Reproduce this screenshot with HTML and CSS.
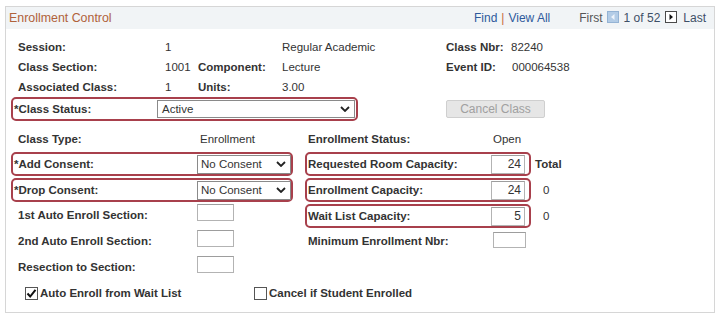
FILE: index.html
```html
<!DOCTYPE html>
<html>
<head>
<meta charset="utf-8">
<link rel="stylesheet" href="styles.css">
</head>
<body>
<div class="panel">
  <div class="hdr">
    <span class="title">Enrollment Control</span>
    <div class="nav">
      <span class="lnk">Find</span><span class="sep">|</span><span class="lnk">View All</span>
      <span class="first">First</span>
      <svg class="ico" width="12" height="12" viewBox="0 0 12 12"><rect x="0.5" y="0.5" width="11" height="11" fill="#b3cce6" stroke="#94b3d4"/><path d="M7.5 3 L4 6 L7.5 9 Z" fill="#eef4fb"/></svg>
      <span class="count">1 of 52</span>
      <svg class="ico ico-next" width="12" height="12" viewBox="0 0 12 12"><rect x="0.5" y="0.5" width="11" height="11" fill="#fff" stroke="#4a4a4a"/><path d="M4.5 3 L8 6 L4.5 9 Z" fill="#111"/></svg>
      <span class="last">Last</span>
    </div>
  </div>
  <div class="content">
    <div class="info">
      <div class="irow"><span class="c1 lbl">Session:</span><span class="c2">1</span><span class="c3"></span><span class="c4">Regular Academic</span><span class="c5 lbl">Class Nbr:</span><span class="c6">82240</span></div>
      <div class="irow"><span class="c1 lbl">Class Section:</span><span class="c2">1001</span><span class="c3 lbl">Component:</span><span class="c4">Lecture</span><span class="c5 lbl">Event ID:</span><span class="c6 c6b">000064538</span></div>
      <div class="irow"><span class="c1 lbl">Associated Class:</span><span class="c2">1</span><span class="c3 lbl">Units:</span><span class="c4">3.00</span></div>
    </div>
    <div class="status-row">
      <div class="hl hl-status">
        <span class="lbl hl-lbl status-lbl">*Class Status:</span>
        <div class="sel sel-wide"><span>Active</span><svg width="10" height="6" viewBox="0 0 10 6"><path d="M1 1 L5 5 L9 1" fill="none" stroke="#222" stroke-width="1.8"/></svg></div>
      </div>
      <div class="btn">Cancel Class</div>
    </div>
    <div class="cols">
      <div class="left">
        <div class="lrow"><span class="lbl ltype">Class Type:</span><span>Enrollment</span></div>
        <div class="hl hl-left hl-first">
          <span class="lbl hl-lbl consent-lbl">*Add Consent:</span>
          <div class="sel sel-small"><span>No Consent</span><svg width="10" height="6" viewBox="0 0 10 6"><path d="M1 1 L5 5 L9 1" fill="none" stroke="#222" stroke-width="1.8"/></svg></div>
        </div>
        <div class="hl hl-left">
          <span class="lbl hl-lbl consent-lbl">*Drop Consent:</span>
          <div class="sel sel-small"><span>No Consent</span><svg width="10" height="6" viewBox="0 0 10 6"><path d="M1 1 L5 5 L9 1" fill="none" stroke="#222" stroke-width="1.8"/></svg></div>
        </div>
        <div class="arow"><span class="lbl alabel">1st Auto Enroll Section:</span><span class="inp inp-sec"></span></div>
        <div class="arow"><span class="lbl alabel">2nd Auto Enroll Section:</span><span class="inp inp-sec"></span></div>
        <div class="arow"><span class="lbl alabel">Resection to Section:</span><span class="inp inp-sec"></span></div>
      </div>
      <div class="right">
        <div class="rrow"><span class="lbl rlabel">Enrollment Status:</span><span>Open</span></div>
        <div class="cap-row cap-first">
          <div class="hl hl-right"><span class="lbl hl-lbl cap-lbl">Requested Room Capacity:</span><span class="inp inp-num">24</span></div>
          <span class="lbl after-total">Total</span>
        </div>
        <div class="cap-row">
          <div class="hl hl-right"><span class="lbl hl-lbl cap-lbl">Enrollment Capacity:</span><span class="inp inp-num">24</span></div>
          <span class="after-zero">0</span>
        </div>
        <div class="cap-row">
          <div class="hl hl-right"><span class="lbl hl-lbl cap-lbl">Wait List Capacity:</span><span class="inp inp-num">5</span></div>
          <span class="after-zero">0</span>
        </div>
        <div class="mrow"><span class="lbl rlabel">Minimum Enrollment Nbr:</span><span class="inp inp-min"></span></div>
      </div>
    </div>
    <div class="checks">
      <div class="chk chk-first">
        <svg width="13" height="13" viewBox="0 0 13 13"><rect x="0.5" y="0.5" width="12" height="12" fill="#fff" stroke="#555"/><path d="M2.5 6.5 L5.2 9.5 L10.5 2.8" fill="none" stroke="#111" stroke-width="2"/></svg>
        <span class="lbl">Auto Enroll from Wait List</span>
      </div>
      <div class="chk chk-second">
        <svg width="13" height="13" viewBox="0 0 13 13"><rect x="0.5" y="0.5" width="12" height="12" fill="#fff" stroke="#555"/></svg>
        <span class="lbl">Cancel if Student Enrolled</span>
      </div>
    </div>
  </div>
</div>
</body>
</html>
```

FILE: styles.css
```css
* { box-sizing: border-box; }
html, body { margin: 0; padding: 0; background: #fff; }
body {
  font-family: "Liberation Sans", Arial, sans-serif;
  font-size: 11.5px;
  color: #333;
}
.panel {
  margin: 6px 0 0 5px;
  width: 710px;
  height: 307px;
  border: 1px solid #d6d6d6;
}
.hdr {
  height: 22px;
  background: #f1f4f6;
  display: flex;
  align-items: center;
  padding: 0 8px 0 3px;
}
.title {
  font-size: 12.4px;
  color: #b0623a;
}
.nav {
  margin-left: auto;
  display: flex;
  align-items: center;
  font-size: 12px;
}
.lnk { color: #2f5a9c; }
.sep { color: #c86a3e; margin: 0 4px; }
.first { color: #555; margin-left: 29px; }
.ico { margin-left: 4px; margin-top: -2px; }
.count { color: #3d4f66; margin-left: 5px; }
.ico-next { margin-left: 5px; }
.last { color: #3d4f66; margin-left: 6px; }

.content { padding: 0 5px; }
.lbl { font-weight: bold; }

.info { padding-top: 8px; }
.irow {
  display: flex;
  height: 20px;
  line-height: 20px;
  padding-left: 7px;
}
.c1 { width: 147px; }
.c2 { width: 33px; }
.c3 { width: 84px; }
.c4 { width: 164px; }
.c5 { width: 65px; }
.c6b { margin-left: 1px; }

.hl {
  border: 2px solid #a8404c;
  border-radius: 5px;
  height: 24px;
  display: flex;
  align-items: center;
}
.hl-lbl { padding-left: 1px; }

.status-row { display: flex; align-items: center; height: 24px; }
.hl-status { width: 347px; }
.status-lbl { width: 144px; }
.sel {
  height: 18px;
  border: 1px solid #8a8a8a;
  background: #fff;
  display: flex;
  align-items: center;
  justify-content: space-between;
  padding: 0 4px 0 4px;
  color: #333;
}
.sel-wide { width: 198px; }
.btn {
  margin-left: 88px;
  width: 99px;
  height: 18px;
  background: #e6e6e6;
  border: 1px solid #cfcfcf;
  border-radius: 2px;
  color: #a0a0a0;
  text-align: center;
  line-height: 16px;
  font-size: 12px;
}

.cols {
  display: flex;
  margin-top: 8px;
}
.left { width: 294px; }
.lrow { height: 20px; line-height: 20px; padding-left: 7px; display: flex; }
.ltype { width: 182px; }
.hl-left { width: 282px; margin-top: 2px; }
.hl-first { margin-top: 3px; }
.consent-lbl { width: 184px; }
.sel-small { width: 94px; height: 19px; padding-left: 3px; }
.arow {
  height: 26px;
  display: flex;
  align-items: flex-start;
  padding-left: 7px;
}
.alabel { width: 179px; line-height: 26px; }
.inp {
  display: block;
  border: 1px solid #b3b3b3;
  border-top-color: #9d9d9d;
  background: #fff;
}
.inp-sec { width: 37px; height: 17px; margin-top: 2px; }

.right { padding-left: 0; }
.rrow { height: 20px; line-height: 20px; padding-left: 3px; display: flex; }
.rlabel { width: 185px; }
.cap-row { display: flex; align-items: center; margin-top: 2px; }
.cap-first { margin-top: 3px; }
.hl-right { width: 226px; }
.cap-lbl { width: 184px; }
.inp-num {
  width: 34px;
  height: 19px;
  text-align: right;
  padding-right: 3px;
  line-height: 17px;
  font-size: 12px;
}
.after-total { margin-left: 4px; }
.after-zero { margin-left: 12px; }
.mrow { height: 26px; display: flex; align-items: flex-start; padding-left: 3px; }
.mrow .rlabel { line-height: 26px; }
.inp-min { width: 33px; height: 16px; margin-top: 4px; }

.checks {
  display: flex;
  align-items: center;
  height: 20px;
  margin-top: 3px;
}
.chk { display: flex; align-items: center; }
.chk svg { margin-right: 2px; }
.chk-first { margin-left: 14px; width: 229px; }
```
